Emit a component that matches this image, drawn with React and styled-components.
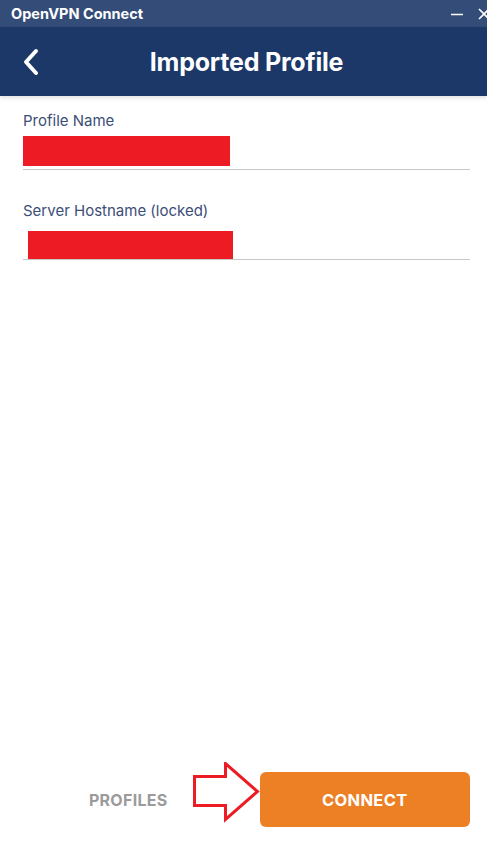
import React from 'react';
import styled, { createGlobalStyle } from 'styled-components';

const GlobalStyle = createGlobalStyle`
  html, body { margin: 0; padding: 0; background: #fff; }
  body { font-family: Inter, "Noto Sans", sans-serif; }
`

const Window = styled.div`
  width: 487px;
  height: 845px;
  display: flex;
  flex-direction: column;
  overflow: hidden;
  background: #fff;
`

const TitleBar = styled.div`
  height: 27px;
  background: #344d78;
  display: flex;
  align-items: center;
  justify-content: space-between;
  padding-left: 11px;
  color: #fff;
  font-size: 14.5px;
  font-weight: 700;
`

const WinButtons = styled.div`
  display: flex;
  align-items: center;
  gap: 13px;
  margin-right: -4px;
`

const Header = styled.div`
  height: 69px;
  background: #1b3868;
  display: grid;
  grid-template-columns: 60px 1fr 54px;
  align-items: center;
  box-shadow: 0 2px 4px rgba(0, 0, 0, 0.12);
  position: relative;
  z-index: 1;
`

const BackButton = styled.div`
  padding-left: 22px;
  display: flex;
  align-items: center;
`

const Title = styled.h1`
  margin: 0;
  text-align: center;
  color: #fff;
  font-size: 25px;
  font-weight: 700;
  letter-spacing: -0.2px;
`

const Form = styled.div`
  flex: 1;
  padding: 16px 17px 0 23px;
  display: flex;
  flex-direction: column;
  gap: 32px;
`

const Field = styled.div`
  display: flex;
  flex-direction: column;
`

const Label = styled.label`
  font-size: 15px;
  color: #3c4e78;
  line-height: 18px;
`

const Value = styled.div`
  height: ${p => p.h}px;
  margin-top: ${p => p.top}px;
  border-bottom: 1.5px solid #c8c8c8;
  display: flex;
  align-items: flex-end;
  padding-left: ${p => p.indent}px;
`

const Redacted = styled.div`
  width: ${p => p.w}px;
  height: ${p => p.h}px;
  background: #ed1c24;
  margin-bottom: ${p => p.gap}px;
`

const Footer = styled.div`
  position: relative;
  display: grid;
  grid-template-columns: 1fr 1fr;
  gap: 26px;
  padding: 0 17px 18px 23px;
`

const TextButton = styled.button`
  border: none;
  background: none;
  height: 55px;
  color: #9b9b9b;
  font-family: inherit;
  font-size: 16px;
  font-weight: 700;
  letter-spacing: 0.3px;
`

const PrimaryButton = styled.button`
  border: none;
  height: 55px;
  border-radius: 6px;
  background: #ed7f25;
  color: #fff;
  font-family: inherit;
  font-size: 16.5px;
  font-weight: 700;
  letter-spacing: 0.3px;
`

const Arrow = styled.svg`
  position: absolute;
  left: 190px;
  top: -10px;
`

const App = () => (
  <Window>
    <GlobalStyle />
    <TitleBar>
      OpenVPN Connect
      <WinButtons>
        <svg width="14" height="14" viewBox="0 0 14 14">
          <path d="M1 7.5h12" stroke="#fff" strokeWidth="1.5" />
        </svg>
        <svg width="14" height="14" viewBox="0 0 14 14">
          <path d="M2 2l10 10M12 2L2 12" stroke="#fff" strokeWidth="1.6" />
        </svg>
      </WinButtons>
    </TitleBar>
    <Header>
      <BackButton>
        <svg width="18" height="28" viewBox="0 0 18 28">
          <path d="M14 3L4 14l10 11" fill="none" stroke="#fff" strokeWidth="4" strokeLinecap="round" strokeLinejoin="round" />
        </svg>
      </BackButton>
      <Title>Imported Profile</Title>
      <div />
    </Header>
    <Form>
      <Field>
        <Label>Profile Name</Label>
        <Value h={34} top={5} indent={0}>
          <Redacted w={207} h={30} gap={3} />
        </Value>
      </Field>
      <Field>
        <Label>Server Hostname (locked)</Label>
        <Value h={38} top={1} indent={5}>
          <Redacted w={205} h={28} gap={0} />
        </Value>
      </Field>
    </Form>
    <Footer>
      <TextButton>PROFILES</TextButton>
      <PrimaryButton>CONNECT</PrimaryButton>
      <Arrow width="72" height="62" viewBox="0 0 72 62">
        <path d="M4.5 14.5H35.5V1.5L67.5 29.5L35.5 57.5V43.5H4.5Z" fill="#fff" stroke="#ed1c24" strokeWidth="3" strokeLinejoin="miter" />
      </Arrow>
    </Footer>
  </Window>
)

export default App
